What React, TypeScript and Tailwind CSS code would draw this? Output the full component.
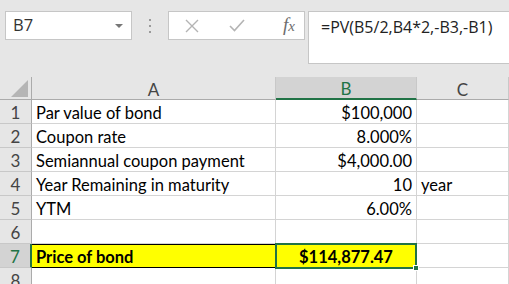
import type { ReactNode } from "react";

const ROWS: { a: string; b: string; c?: string }[] = [
  { a: "Par value of bond", b: "$100,000" },
  { a: "Coupon rate", b: "8.000%" },
  { a: "Semiannual coupon payment", b: "$4,000.00" },
  { a: "Year Remaining in maturity", b: "10", c: "year" },
  { a: "YTM", b: "6.00%" },
  { a: "", b: "" },
];

const cellFont = { fontFamily: "Lato, 'Open Sans', sans-serif" };

function HeaderCell({ children, active }: { children?: ReactNode; active?: boolean }) {
  return (
    <div
      className={`flex h-[23px] items-center justify-center border-r border-[#c8c8c8] pt-[3px] text-[17px] ${
        active ? "border-b-2 border-b-[#217346] bg-[#d3d3d3] text-[#217346]" : "border-b border-b-[#ababab] bg-[#e6e6e6] text-[#444]"
      }`}
    >
      {children}
    </div>
  );
}

function RowNum({ n, active }: { n: number; active?: boolean }) {
  return (
    <div
      className={`flex h-[24px] items-center justify-center border-b border-[#c8c8c8] pt-[3px] text-[17px] ${
        active ? "border-r-2 border-r-[#217346] bg-[#d3d3d3] text-[#217346]" : "border-r border-r-[#ababab] bg-[#e6e6e6] text-[#444]"
      }`}
    >
      {n}
    </div>
  );
}

function Cell({ children, className = "" }: { children?: ReactNode; className?: string }) {
  return (
    <div className={`flex h-[24px] items-center border-b border-r border-[#d4d4d4] px-[4px] pt-[3px] text-[16.5px] text-black ${className}`}>
      {children}
    </div>
  );
}

export default function App() {
  return (
    <div className="h-[284px] w-[509px] overflow-hidden bg-[#e6e6e6]" style={cellFont}>
      {/* formula bar */}
      <div className="flex h-[77px] items-start pt-[11px]">
        <div className="ml-[5px] flex h-[29px] w-[127px] items-center justify-between border border-[#c6c6c6] bg-white pl-[7px] pr-[8px]">
          <span className="text-[16.5px] text-[#333]" style={{ fontFamily: "'Open Sans', sans-serif" }}>
            B7
          </span>
          <svg width="8" height="4" viewBox="0 0 8 4">
            <path d="M0 0h8L4 4z" fill="#777" />
          </svg>
        </div>
        <div className="ml-[17px] mt-[8px] flex flex-col gap-[4px]">
          <span className="block h-[2px] w-[2px] bg-[#9a9a9a]" />
          <span className="block h-[2px] w-[2px] bg-[#9a9a9a]" />
          <span className="block h-[2px] w-[2px] bg-[#9a9a9a]" />
        </div>
        <div className="ml-[17px] flex h-[29px] w-[137px] items-center border border-[#c6c6c6] bg-white">
          <svg className="ml-[16px]" width="14" height="14" viewBox="0 0 14 14">
            <path d="M1 1l12 12M13 1L1 13" stroke="#b4b4b4" strokeWidth="1.4" fill="none" />
          </svg>
          <svg className="ml-[30px]" width="16" height="13" viewBox="0 0 16 13">
            <path d="M1 7l4.5 4.5L15 1" stroke="#b4b4b4" strokeWidth="1.6" fill="none" />
          </svg>
          <span
            className="ml-[38px] text-[19px] italic text-[#6d6d6d]"
            style={{ fontFamily: "'Liberation Serif', serif" }}
          >
            f<span className="text-[15px]">x</span>
          </span>
        </div>
        <div className="ml-[3px] h-[53px] flex-1 border border-r-0 border-[#c6c6c6] bg-white pl-[12px] pt-[3px]">
          <span className="text-[16px] text-[#222]" style={{ fontFamily: "'Open Sans', sans-serif" }}>
            =PV(B5/2,B4*2,-B3,-B1)
          </span>
        </div>
      </div>

      {/* grid */}
      <div className="grid grid-cols-[32px_244px_141px_92px] bg-white">
        <div className="flex h-[23px] items-end justify-end border-b border-r border-[#ababab] bg-[#e6e6e6] pb-[2px] pr-[3px]">
          <svg width="17" height="17" viewBox="0 0 17 17">
            <path d="M17 0V17H0z" fill="#b5b5b5" />
          </svg>
        </div>
        <HeaderCell>A</HeaderCell>
        <HeaderCell active>B</HeaderCell>
        <HeaderCell>C</HeaderCell>

        {ROWS.map((r, i) => (
          <div key={i} className="contents">
            <RowNum n={i + 1} />
            <Cell>{r.a}</Cell>
            <Cell className="justify-end">{r.b}</Cell>
            <Cell>{r.c}</Cell>
          </div>
        ))}

        <RowNum n={7} active />
        <div className="flex h-[24px] items-center border-y border-black bg-[#ffff00] px-[4px] pt-[2px] text-[16.5px] font-bold text-black">
          Price of bond
        </div>
        <div className="relative -my-px -ml-px flex h-[26px] items-center justify-center border-2 border-[#217346] bg-[#ffff00] pt-[2px] text-[16.5px] font-bold text-black">
          $114,877.47
          <span className="absolute -bottom-[4px] -right-[4px] h-[6px] w-[6px] border border-white bg-[#217346]" />
        </div>
        <Cell />

        <RowNum n={8} />
        <Cell />
        <Cell />
        <Cell />
      </div>
    </div>
  );
}
